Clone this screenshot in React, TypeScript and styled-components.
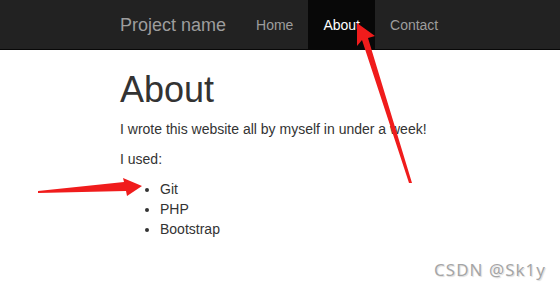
import React from "react";
import styled, { createGlobalStyle } from "styled-components";

const Global = createGlobalStyle`
  html, body { margin: 0; padding: 0; background: #fff; }
  body {
    font-family: "Liberation Sans", Arial, sans-serif;
    font-size: 14px;
    line-height: 20px;
    color: #333;
  }
  * { box-sizing: border-box; }
`;

const Page = styled.div`
  position: relative;
  width: 560px;
  height: 289px;
  overflow: hidden;
`;

const Navbar = styled.nav`
  height: 50px;
  background: #222;
  border-bottom: 1px solid #080808;
`;

const NavInner = styled.div`
  display: flex;
  align-items: stretch;
  height: 49px;
  padding-left: 105px;
`;

const Brand = styled.a`
  display: flex;
  align-items: center;
  padding: 0 15px;
  font-size: 18px;
  color: #9d9d9d;
  text-decoration: none;
`;

const NavList = styled.ul`
  display: flex;
  list-style: none;
  margin: 0;
  padding: 0;
`;

const NavItem = styled.li<{ $active?: boolean }>`
  display: flex;
  align-items: center;
  padding: 0 15px;
  font-size: 14px;
  color: ${(p) => (p.$active ? "#fff" : "#9d9d9d")};
  background: ${(p) => (p.$active ? "#080808" : "transparent")};
`;

const Container = styled.main`
  padding: 0 120px;
`;

const Title = styled.h1`
  margin: 20px 0 9px;
  font-size: 36px;
  line-height: 39.6px;
  font-weight: 500;
  color: #333;
`;

const Para = styled.p`
  margin: 0 0 10px;
`;

const List = styled.ul`
  margin: 0;
  padding-left: 40px;
  list-style: disc;
`;

const Watermark = styled.div`
  position: absolute;
  right: 14px;
  bottom: 9px;
  font-family: "Noto Sans", "DejaVu Sans", sans-serif;
  font-size: 17px;
  letter-spacing: 1px;
  color: #a5a5a5;
  text-shadow: 0 0 1px #fff, 1px 1px 1px rgba(0, 0, 0, 0.15);
`;

const Overlay = styled.svg`
  position: absolute;
  left: 0;
  top: 0;
  pointer-events: none;
`;

export default function App() {
  return (
    <>
      <Global />
      <Page>
        <Navbar>
          <NavInner>
            <Brand>Project name</Brand>
            <NavList>
              <NavItem>Home</NavItem>
              <NavItem $active>About</NavItem>
              <NavItem>Contact</NavItem>
            </NavList>
          </NavInner>
        </Navbar>
        <Container>
          <Title>About</Title>
          <Para>I wrote this website all by myself in under a week!</Para>
          <Para>I used:</Para>
          <List>
            <li>Git</li>
            <li>PHP</li>
            <li>Bootstrap</li>
          </List>
        </Container>
        <Watermark>CSDN @Sk1y</Watermark>
        <Overlay width="560" height="289" viewBox="0 0 560 289">
          <polygon
            fill="#f01c1c"
            points="357,23 375,36 368,38 412,183 409,183 362,40 357,46"
          />
          <polygon
            fill="#f01c1c"
            points="38,191 124,182 123,178 142,186 127,196 126,191 38,193"
          />
        </Overlay>
      </Page>
    </>
  );
}
